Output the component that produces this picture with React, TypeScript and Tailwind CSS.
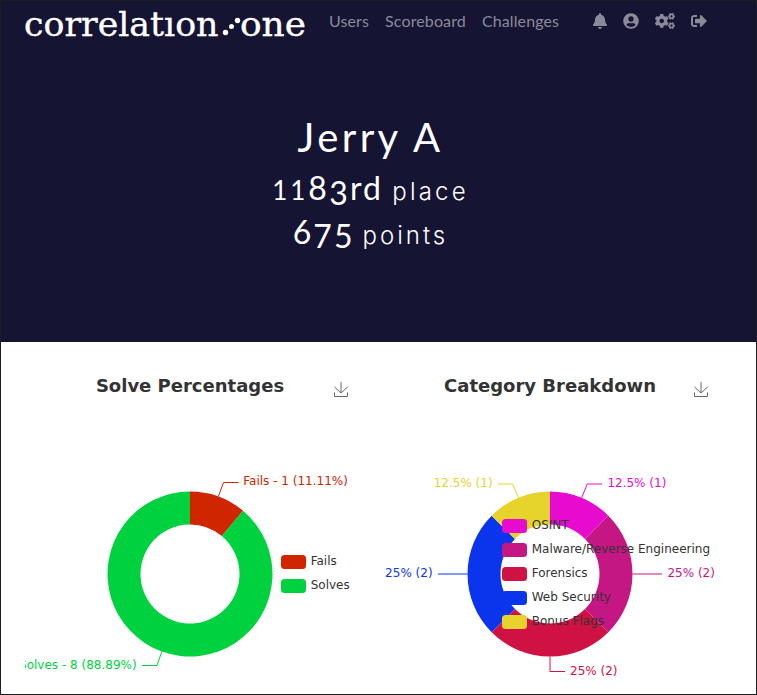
import React from "react";
import { FaBell, FaUserCircle, FaCogs, FaSignOutAlt } from "react-icons/fa";

type Slice = { name: string; value: number; color: string };
type Label = { text: string; x: number; y: number; end?: boolean; color: string; line: string };

const C = 165;
const CY = 200;

function arc(start: number, end: number) {
  const p = (a: number, r: number) =>
    `${(C + r * Math.sin(a * 2 * Math.PI)).toFixed(3)} ${(CY - r * Math.cos(a * 2 * Math.PI)).toFixed(3)}`;
  const big = end - start > 0.5 ? 1 : 0;
  return `M${p(start, 82.5)}A82.5 82.5 0 ${big} 1 ${p(end, 82.5)}L${p(end, 49.5)}A49.5 49.5 0 ${big} 0 ${p(start, 49.5)}Z`;
}

function Donut({
  title,
  slices,
  labels,
  legendX,
  legendY,
}: {
  title: string;
  slices: Slice[];
  labels: Label[];
  legendX: number;
  legendY: number;
}) {
  const total = slices.reduce((s, d) => s + d.value, 0);
  let sum = 0;
  return (
    <svg
      width="330"
      height="320"
      viewBox="0 0 330 320"
      className="block shrink-0 font-['DejaVu_Sans',sans-serif] text-[12px]"
    >
      <text x="165" y="18" textAnchor="middle" fill="#333" className="text-[18px] font-bold">
        {title}
      </text>
      <g fill="none" stroke="#666" strokeWidth="1">
        <path d="M309.5 18.5v4h13v-4" />
        <path d="M309.3 12.8l6.7 6.2 6.7-6.2M316 8v11" />
      </g>
      {slices.map((s) => {
        const a = sum / total;
        sum += s.value;
        return <path key={s.name} d={arc(a, sum / total)} fill={s.color} />;
      })}
      {labels.map((l) => (
        <g key={l.line}>
          <path d={l.line} fill="none" stroke={l.color} />
          <text x={l.x} y={l.y} textAnchor={l.end ? "end" : "start"} fill={l.color}>
            {l.text}
          </text>
        </g>
      ))}
      {slices.map((s, i) => (
        <g key={s.name}>
          <rect x={legendX} y={legendY + i * 24} width="25" height="14" rx="3.5" fill={s.color} />
          <text x={legendX + 29.7} y={legendY + 10 + i * 24} fill="#333">
            {s.name}
          </text>
        </g>
      ))}
    </svg>
  );
}

function Logo() {
  return (
    <svg
      width="284"
      height="40"
      viewBox="0 0 284 40"
      fill="#fff"
      className="block overflow-visible font-['DejaVu_Serif',serif] text-[34px]"
    >
      <g stroke="#fff" strokeWidth="0.35">
        <text x="-1" y="34.7" textLength="194.5" lengthAdjust="spacingAndGlyphs">
          correlatıon
        </text>
        <text x="215" y="34.7" textLength="66" lengthAdjust="spacingAndGlyphs">
          one
        </text>
      </g>
      <circle cx="200.5" cy="31.5" r="2.7" />
      <circle cx="206.5" cy="25.5" r="2.5" />
      <circle cx="212.5" cy="19.5" r="2.7" />
    </svg>
  );
}

export default function App() {
  return (
    <div className="h-[695px] w-[757px] overflow-hidden border border-[#1d1c20] bg-white">
      <div className="flex h-[341px] flex-col bg-[#161433]">
        <nav className="flex h-10 items-center pl-6 font-['Lato',sans-serif] text-[16px] text-[#8b8a99]">
          <Logo />
          <div className="ml-5 flex gap-4 tracking-[0.12px]">
            <a>Users</a>
            <a>Scoreboard</a>
            <a>Challenges</a>
          </div>
          <div className="ml-[34px] flex items-center gap-4">
            <FaBell className="h-4 w-[14px]" />
            <FaUserCircle className="h-4 w-4" />
            <FaCogs className="h-4 w-5" />
            <FaSignOutAlt className="h-4 w-4" />
          </div>
        </nav>
        <div className="flex w-[739px] flex-col items-center pt-[72px] font-['Lato',sans-serif] text-white">
          <h1 className="h-12 text-[40px] leading-[48px] tracking-[3.4px]">Jerry A</h1>
          <h2 className="mt-2 flex h-[38px] items-baseline text-[32px] leading-[38px] tracking-[2.2px]">
            <span className="text-[26px] tracking-[3px]">11</span>
            <span>8</span>
            <span className="translate-y-[5px]">3</span>
            <span>rd</span>
            <small className="ml-[9px] font-['Inter',sans-serif] text-[24px] font-light tracking-[3.2px]">place</small>
          </h2>
          <h2 className="mt-[6px] flex h-[38px] items-baseline text-[32px] leading-[38px] tracking-[2px]">
            <span>6</span>
            <span className="translate-y-[4px]">75</span>
            <small className="ml-[8px] font-['Inter',sans-serif] text-[24px] font-light tracking-[3px]">points</small>
          </h2>
        </div>
      </div>
      <main className="flex gap-[30px] pl-6 pt-8">
        <Donut
          title="Solve Percentages"
          legendX={256}
          legendY={181}
          slices={[
            { name: "Fails", value: 1, color: "#cf2600" },
            { name: "Solves", value: 8, color: "#00d13f" },
          ]}
          labels={[
            { text: "Fails - 1 (11.11%)", x: 218.3, y: 111, color: "#cf2600", line: "M193.3 122.5L198.5 108.5H213.5" },
            { text: "Solves - 8 (88.89%)", x: 111.6, y: 295, end: true, color: "#00d13f", line: "M136.8 277.5L132 291.5H117" },
          ]}
        />
        <Donut
          title="Category Breakdown"
          legendX={117}
          legendY={145}
          slices={[
            { name: "OSINT", value: 1, color: "#e60bcf" },
            { name: "Malware/Reverse Engineering", value: 2, color: "#c41783" },
            { name: "Forensics", value: 2, color: "#cf1243" },
            { name: "Web Security", value: 2, color: "#0a35ed" },
            { name: "Bonus Flags", value: 1, color: "#e6d42c" },
          ]}
          labels={[
            { text: "12.5% (1)", x: 222.4, y: 113, color: "#e60bcf", line: "M196.6 123.8L202.3 110H217" },
            { text: "25% (2)", x: 282.4, y: 203, color: "#c41783", line: "M247.5 200H277" },
            { text: "25% (2)", x: 185, y: 301, color: "#cf1243", line: "M165 282.5V297.5H180" },
            { text: "25% (2)", x: 47.6, y: 203, end: true, color: "#0a35ed", line: "M82.5 200H53" },
            { text: "12.5% (1)", x: 107.6, y: 113, end: true, color: "#e6d42c", line: "M133.4 123.8L127.7 110H113" },
          ]}
        />
      </main>
    </div>
  );
}
